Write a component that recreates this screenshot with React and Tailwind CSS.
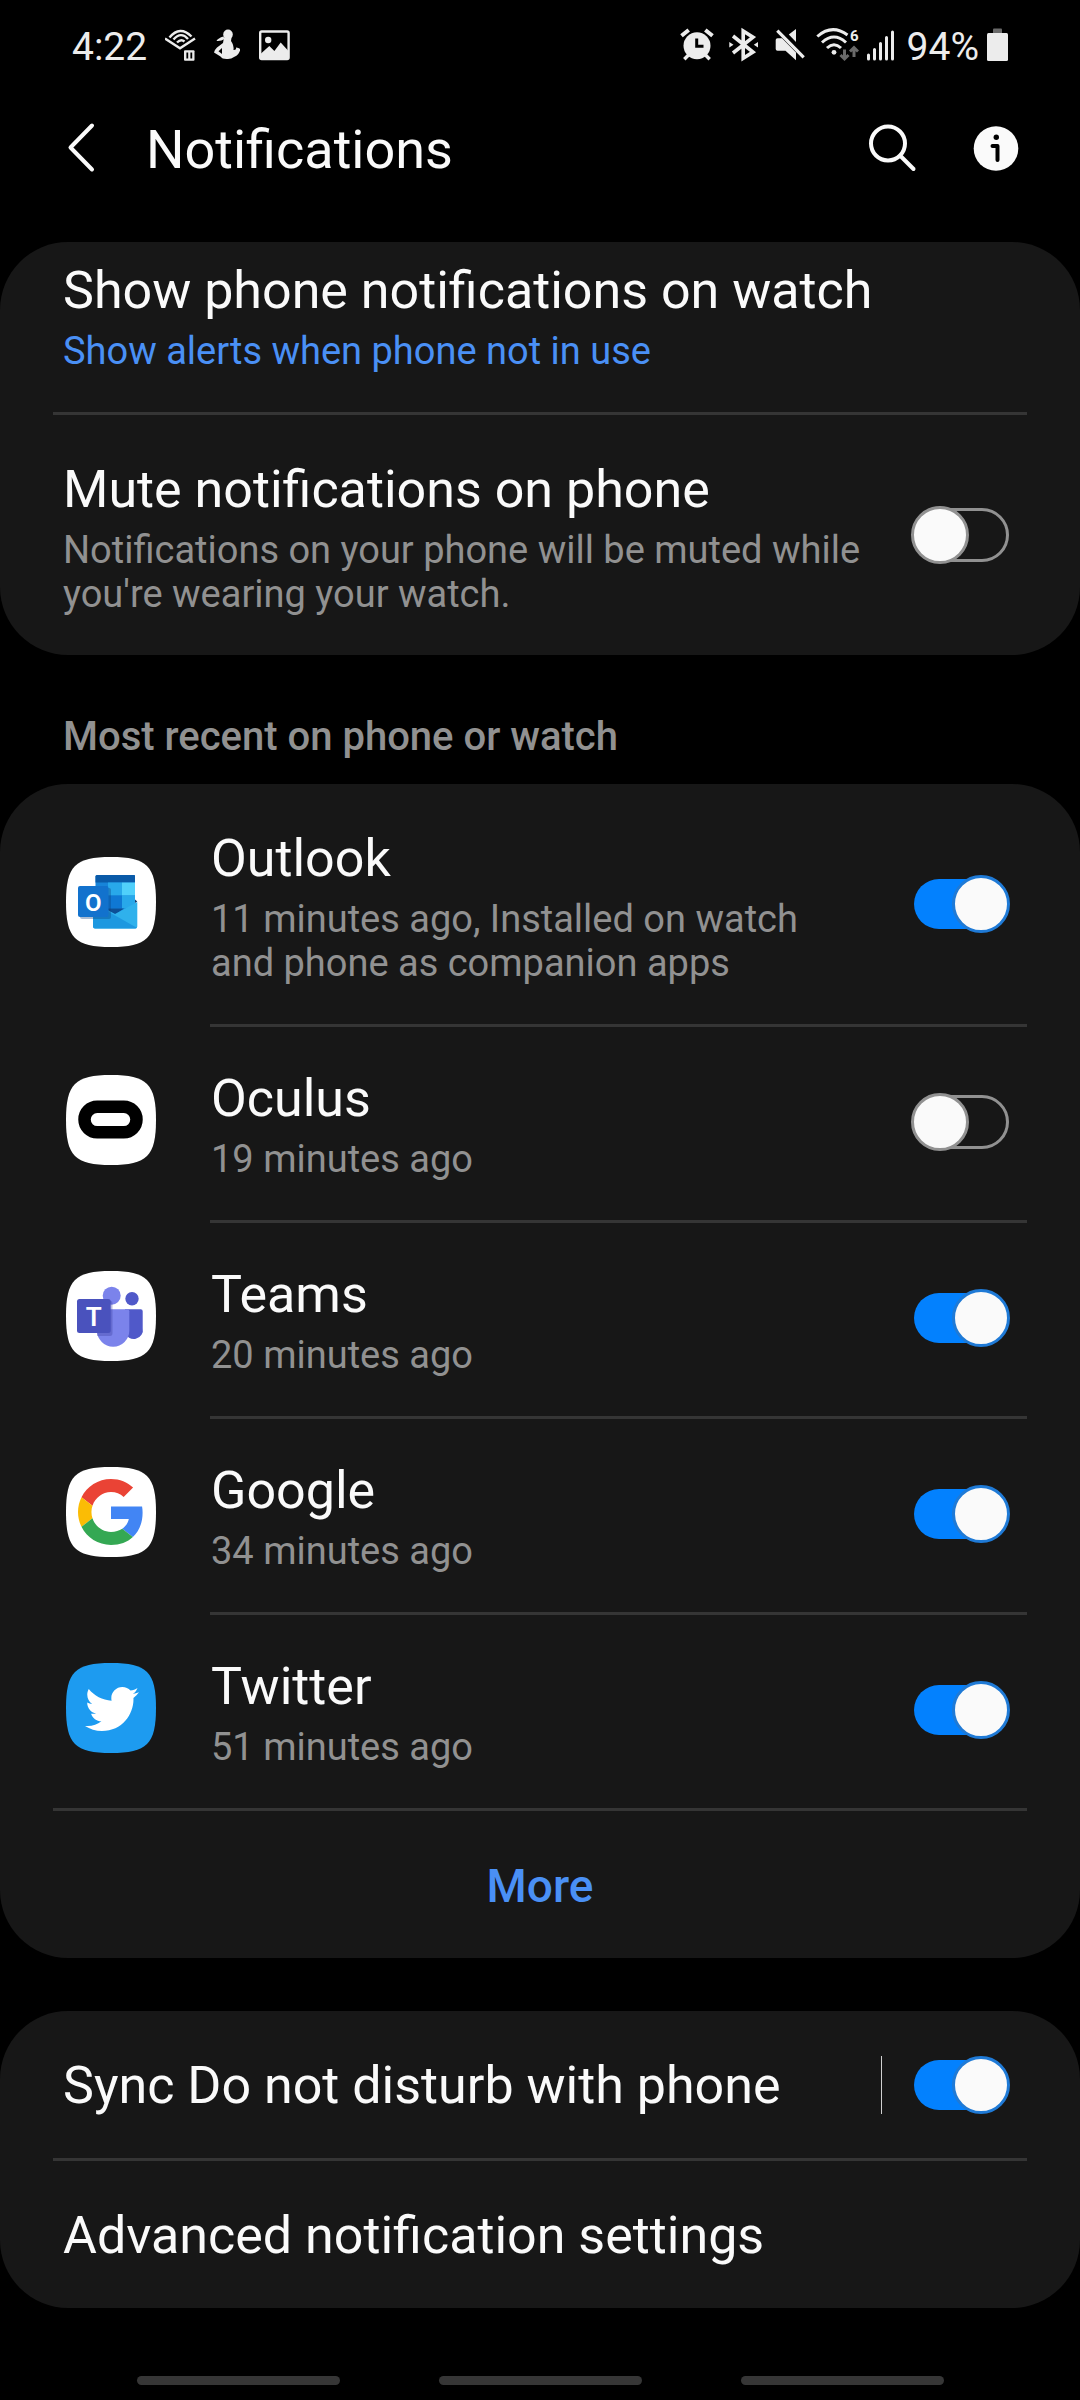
import React, { useState } from "react";
import { FaTwitter } from "react-icons/fa";

const SQUIRCLE =
  "M0 45C0 9 9 0 45 0S90 9 90 45 81 90 45 90 0 81 0 45Z";

const AppIcon = ({ color = "#ffffff", children }) => (
  <svg viewBox="0 0 90 90" className="w-[90px] h-[90px] mb-1 shrink-0" aria-hidden="true">
    <path d={SQUIRCLE} fill={color} />
    {children}
  </svg>
);

const OutlookIcon = () => (
  <AppIcon>
    <path d="M31 18H68Q69 18 69 19V64H29.500V19.500Q29.500 18 31 18Z" fill="#1784d9" />
    <path d="M31 18H68Q69 18 69 19V25.500H29.500V19.500Q29.500 18 31 18Z" fill="#0a5aa8" />
    <rect x="42" y="25.500" width="14" height="13" fill="#28a8ea" />
    <rect x="56" y="25.500" width="13" height="13" fill="#50d0fb" />
    <rect x="42" y="38.500" width="14" height="13" fill="#0f78d4" />
    <rect x="56" y="38.500" width="13" height="13" fill="#28a8ea" />
    <path d="M42 51.500H58L50 57 42 56Z" fill="#0d4f96" />
    <path d="M69 42.500 71.300 44.500 69 46Z" fill="#123b6d" />
    <path d="M71.300 45V69.500Q71.300 71.500 69.300 71.500H29Q27 71.500 27 69.500V45L49 57Z" fill="#2fb1ec" />
    <path d="M27 46 70.800 70.800Q70.300 71.500 69.300 71.500H29Q27 71.500 27 69.500Z" fill="#1d98e0" />
    <rect x="14" y="31" width="31" height="31" rx="2" fill="#0b3f7d" opacity="0.350" />
    <rect x="12" y="29" width="30.500" height="31" rx="2" fill="#1272cd" />
    <text x="27.300" y="53.500" textAnchor="middle" fill="#fff" fontSize="24" fontWeight="600" fontFamily="Roboto, sans-serif">
      O
    </text>
  </AppIcon>
);

const OculusIcon = () => (
  <AppIcon>
    <rect x="18.500" y="31.800" width="52" height="25.500" rx="12.700" fill="none" stroke="#000" strokeWidth="12.500" />
  </AppIcon>
);

const TeamsIcon = () => (
  <AppIcon>
    <circle cx="66" cy="27.700" r="6.700" fill="#5059c9" />
    <path d="M59 38.300H74.700Q76.700 38.300 76.700 40.300V57A9 9 0 0 1 59 61Z" fill="#5059c9" />
    <circle cx="45.700" cy="24.700" r="9" fill="#7b83eb" />
    <path d="M31 38.300H61.300Q63.300 38.300 63.300 40.300V59.500A16 16 0 0 1 31 59.500Z" fill="#7b83eb" />
    <path d="M36 30H44.700Q46.500 30 46.500 32V62Q46.500 65 44 65H31V38Z" fill="#3c3f9e" opacity="0.350" />
    <rect x="11" y="28" width="33.700" height="34" rx="2.500" fill="#4a52bd" />
    <text x="27.700" y="54.500" textAnchor="middle" fill="#fff" fontSize="26" fontWeight="600" fontFamily="Roboto, sans-serif">
      T
    </text>
  </AppIcon>
);

const GoogleIcon = () => (
  <AppIcon>
    <svg x="12" y="12" width="66" height="66" viewBox="0 0 48 48">
      <path fill="#EA4335" d="M24 9.500c3.540 0 6.710 1.220 9.210 3.600l6.850-6.850C35.900 2.380 30.470 0 24 0 14.620 0 6.510 5.380 2.560 13.220l7.980 6.190C12.430 13.720 17.740 9.500 24 9.500z" />
      <path fill="#4285F4" d="M46.980 24.550c0-1.570-.15-3.090-.38-4.550H24v9.020h12.940c-.58 2.960-2.260 5.480-4.780 7.180l7.730 6c4.510-4.180 7.090-10.360 7.090-17.650z" />
      <path fill="#FBBC05" d="M10.530 28.590c-.48-1.450-.76-2.990-.76-4.590s.27-3.140.76-4.590l-7.980-6.190C.92 16.460 0 20.120 0 24c0 3.880.92 7.540 2.560 10.780l7.970-6.190z" />
      <path fill="#34A853" d="M24 48c6.480 0 11.930-2.130 15.890-5.810l-7.730-6c-2.150 1.450-4.920 2.300-8.160 2.300-6.260 0-11.570-4.220-13.470-9.910l-7.980 6.190C6.510 42.620 14.620 48 24 48z" />
    </svg>
  </AppIcon>
);

const TwitterIcon = () => (
  <AppIcon color="#1d9bf0">
    <FaTwitter x="19" y="19" size={54} color="#fff" />
  </AppIcon>
);

const Toggle = ({ id, label, defaultChecked }) => {
  const [checked, setChecked] = useState(defaultChecked);

  return (
    <input
      id={id}
      type="checkbox"
      aria-label={label}
      checked={checked}
      onChange={(e) => setChecked(e.target.checked)}
      className="relative appearance-none shrink-0 w-[99px] h-[58px] before:absolute before:left-[3px] before:top-[2px] before:w-[95px] before:h-[54px] before:rounded-full before:border-3 before:border-[#919191] checked:before:top-1 checked:before:h-[50px] checked:before:border-0 checked:before:bg-[#0381fe] after:absolute after:left-0 after:top-0 after:size-[58px] after:rounded-full after:border-3 after:border-[#919191] after:bg-[#fafafa] checked:after:left-auto checked:after:right-0 checked:after:border-[#1f7ad6]"
    />
  );
};

const Divider = ({ inset }) => (
  <hr className={`border-0 h-[3px] bg-[#353535] mr-[53px] ${inset ? "ml-[210px]" : "ml-[53px]"}`} />
);

const Card = ({ children }) => (
  <section className="bg-[#171717] rounded-[68px] overflow-hidden">{children}</section>
);

const apps = [
  {
    id: "outlook",
    name: "Outlook",
    detail: "11 minutes ago, Installed on watch and phone as companion apps",
    Icon: OutlookIcon,
    on: true,
    tall: true,
  },
  { id: "oculus", name: "Oculus", detail: "19 minutes ago", Icon: OculusIcon, on: false },
  { id: "teams", name: "Teams", detail: "20 minutes ago", Icon: TeamsIcon, on: true },
  { id: "google", name: "Google", detail: "34 minutes ago", Icon: GoogleIcon, on: true },
  { id: "twitter", name: "Twitter", detail: "51 minutes ago", Icon: TwitterIcon, on: true },
];

const AppRow = ({ app }) => (
  <div className={`flex items-center pl-[66px] pr-[70px] ${app.tall ? "" : "pb-[3px]"}`}>
    <app.Icon />
    <label
      htmlFor={app.id}
      className={`flex-1 ml-[55px] mr-20 ${app.tall ? "pt-[45px] pb-[39px]" : "pt-[42px] pb-[36px]"}`}
    >
      <span className="block text-[52px] leading-[60px]">{app.name}</span>
      <span className="block mt-2 text-[38px] leading-[44px] text-[#919191]">{app.detail}</span>
    </label>
    <Toggle id={app.id} label={app.name} defaultChecked={app.on} />
  </div>
);

const StatusBar = () => (
  <div className="flex justify-between items-center pt-[23px] px-[72px] text-[39px] leading-[48px] text-[#ececec]">
    <div className="flex items-center gap-[18px]">
      <span>4:22</span>
      {/* Audiobook, paused */}
      <svg width="31" height="40" viewBox="0 0 31 40" fill="none" stroke="#ececec" strokeWidth="2.400">
        <path d="M0 11.500 15 21.300 30 11.500" />
        <path d="M4.500 10.500Q15-2 26.500 9.500" />
        <path d="M8.500 12.500Q16 4 23 12" />
        <path d="M12 15.500Q16 11.500 19.500 14.500" />
        <rect x="19" y="23.300" width="10.500" height="10.500" rx="1" fill="#ececec" stroke="none" />
        <path d="M22.300 25.500V31.500M26.300 25.500V31.500" stroke="#000" strokeWidth="1.800" />
      </svg>
      <svg width="27" height="40" viewBox="0 0 27 40" fill="#ececec">
        <ellipse cx="14" cy="7.500" rx="4.800" ry="5" />
        <path d="M10 10.500H17.500L17 14Q20 18 19.500 23Q22 23.500 22.500 20.500Q23.500 20.500 26 22Q25.500 28 20 30Q17 32.500 12.500 32Q8 32 6.500 29.500L0 25.500Q0 23.500 3 20.500L9 16Z" />
        <path d="M2.500 14Q4 11 9.500 9.500L10.500 12Q7 14.500 2.500 14Z" />
        <path d="M4.500 24.300 8 21V27Z" fill="#000" />
        <path d="M22.500 22.500V20.500L26 22V24.500Z" />
      </svg>
      <svg width="31" height="40" viewBox="0 0 31 40" fill="#ececec">
        <rect x="1.200" y="4.500" width="28.400" height="27.500" rx="1.500" fill="none" stroke="#ececec" strokeWidth="2.400" />
        <circle cx="9.200" cy="13" r="3.200" />
        <path d="M2 26.500 10.300 19 15.400 24 21.700 15.500 29 23.500V32H2Z" />
      </svg>
    </div>

    <div className="flex items-center gap-2">
      <svg width="40" height="40" viewBox="0 0 40 40" fill="none" stroke="#ececec">
        <circle cx="20" cy="18.700" r="13.500" fill="#ececec" stroke="none" />
        <path d="M4.500 8.800 11.700 3M28.300 3 35.500 8.800" strokeWidth="4" />
        <path d="M12 27.500 7.300 32.300M28 27.500 32.700 32.300" strokeWidth="3.400" />
        <path d="M19.700 11.500V19.300H26.500" stroke="#000" strokeWidth="3" />
      </svg>
      <svg width="38" height="40" viewBox="0 0 38 40" fill="none" stroke="#ececec" strokeWidth="3.600">
        <path d="M8 9 28 25 18.200 31.300V4L28 10.200 8 26" />
        <path d="M4.300 15V20.500L8.500 17.700ZM33 15V20.500L28.800 17.700Z" fill="#ececec" stroke="none" />
      </svg>
      <svg width="36" height="40" viewBox="0 0 36 40" fill="#ececec">
        <path d="M6.500 11.300H11L25 25.500V33.300L14.500 23.700H6.500Q4.700 23.700 4.700 22V13Q4.700 11.300 6.500 11.300Z" />
        <path d="M25 2V15L17.800 7.500Z" />
        <path d="M6.300 3.700 32.700 30.300" stroke="#ececec" strokeWidth="3.200" />
      </svg>
      <svg width="44" height="40" viewBox="0 0 44 40" fill="none" stroke="#ececec" strokeWidth="3">
        <path d="M2.300 9.500Q17-3.500 32.500 8M7 15.500Q19 4.500 31 15.500M12 21Q19 14.500 26 21" />
        <circle cx="19" cy="25.300" r="2.400" fill="#ececec" stroke="none" />
        <path d="M29.500 22.500V31.500M25.500 28 29.500 32 33.500 28M39 30V20.500M35 24.500 39 20.500 43 24.500" stroke="#6a6a6a" />
        <text x="35" y="14" fill="#ececec" stroke="none" fontSize="15" fontWeight="700">
          6
        </text>
      </svg>
      <svg width="32" height="40" viewBox="0 0 32 40" stroke="#ececec" strokeWidth="3" strokeLinecap="round">
        <path d="M1.500 28V32M7.500 22.500V32M13.500 16.500V32M19.500 10.500V32M25.500 5V32" />
      </svg>
      <span>94%</span>
      <svg width="21" height="40" viewBox="0 0 21 40" fill="#ececec">
        <rect x="6" y="1.500" width="9" height="6" rx="1" fill="#6a6a6a" />
        <rect x="0" y="6" width="21" height="28" rx="1.500" />
      </svg>
    </div>
  </div>
);

const AppBar = () => (
  <header className="flex items-center h-[158px] pl-[66px] pr-[60px] text-[#fafafa]">
    <button aria-label="Back" className="shrink-0">
      <svg width="32" height="56" viewBox="0 0 32 56" fill="none" stroke="currentColor" strokeWidth="4" strokeLinecap="round" strokeLinejoin="round">
        <path d="M26 3.500 4.500 25.500 26 47.500" />
      </svg>
    </button>
    <h1 className="flex-1 ml-12 text-[54px] leading-[66px]">Notifications</h1>
    <button aria-label="Search" className="mr-[54px]">
      <svg width="52" height="56" viewBox="0 0 52 56" fill="none" stroke="currentColor" strokeWidth="4" strokeLinecap="round">
        <circle cx="22" cy="21.500" r="17" />
        <path d="M35 34.500 47.500 47" />
      </svg>
    </button>
    <button aria-label="About">
      <svg width="48" height="56" viewBox="0 0 48 56">
        <circle cx="24" cy="26.500" r="22.300" fill="currentColor" />
        <circle cx="24.300" cy="15.200" r="2.700" fill="#000" />
        <path d="M20.500 24H25.500V38" fill="none" stroke="#000" strokeWidth="4" strokeLinecap="round" strokeLinejoin="round" />
      </svg>
    </button>
  </header>
);

const App = () => {
  return (
    <div className="min-h-screen flex flex-col bg-black text-[#fafafa] font-[Roboto,sans-serif]">
      <StatusBar />
      <AppBar />

      <main className="flex-1 mt-[13px]">
        <Card>
          <button className="block w-full text-left px-[63px] pt-[19px] pb-[39px]">
            <span className="block text-[52px] leading-[60px]">Show phone notifications on watch</span>
            <span className="block mt-2 text-[38px] leading-[44px] text-[#4a90f5]">
              Show alerts when phone not in use
            </span>
          </button>
          <Divider />
          <div className="flex items-center pl-[63px] pr-[70px]">
            <label htmlFor="mute" className="flex-1 mr-10 pt-[45px] pb-[39px]">
              <span className="block text-[52px] leading-[60px]">Mute notifications on phone</span>
              <span className="block mt-2 text-[38px] leading-[44px] text-[#919191]">
                Notifications on your phone will be muted while you're wearing your watch.
              </span>
            </label>
            <Toggle id="mute" label="Mute notifications on phone" defaultChecked={false} />
          </div>
        </Card>

        <h2 className="px-[63px] pt-[60px] pb-[25px] text-[40px] leading-[44px] font-medium text-[#919191]">
          Most recent on phone or watch
        </h2>

        <Card>
          {apps.map((app, index) => (
            <React.Fragment key={app.id}>
              <AppRow app={app} />
              <Divider inset={index < apps.length - 1} />
            </React.Fragment>
          ))}
          <button className="flex items-center justify-center w-full h-[147px] pt-[3px] text-[46px] leading-[60px] font-medium text-[#4a90f5]">
            More
          </button>
        </Card>

        <div className="mt-[53px]">
          <Card>
            <div className="flex items-center h-[147px] pl-[63px] pr-[70px]">
              <label htmlFor="dnd" className="flex-1 pt-[3px] text-[52px] leading-[60px]">
                Sync Do not disturb with phone
              </label>
              <span className="w-px h-[58px] mr-[29px] bg-[#d0d0d0]" />
              <Toggle id="dnd" label="Sync Do not disturb with phone" defaultChecked />
            </div>
            <Divider />
            <button className="flex items-center w-full h-[147px] pt-[3px] px-[63px] text-left text-[52px] leading-[60px]">
              Advanced notification settings
            </button>
          </Card>
        </div>
      </main>

      <nav className="flex justify-center gap-[99px] pb-[15px]">
        <button aria-label="Recents" className="w-[203px] h-[9px] rounded-full bg-[#363636]" />
        <button aria-label="Home" className="w-[203px] h-[9px] rounded-full bg-[#363636]" />
        <button aria-label="Back to previous app" className="w-[203px] h-[9px] rounded-full bg-[#363636]" />
      </nav>
    </div>
  );
};

export default App;
